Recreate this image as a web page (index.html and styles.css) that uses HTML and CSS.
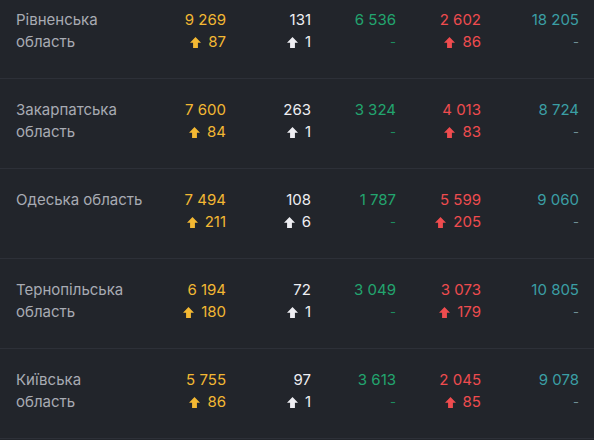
FILE: index.html
```html
<!DOCTYPE html>
<html lang="uk">
<head>
<meta charset="utf-8">
<link rel="stylesheet" href="styles.css">
<title>Області</title>
</head>
<body>
<svg width="0" height="0" class="defs" aria-hidden="true">
  <defs>
    <symbol id="up" viewBox="0 0 10 10"><path d="M5 0 L10 5.2 L7.2 5.2 L7.2 10 L2.8 10 L2.8 5.2 L0 5.2 Z" fill="currentColor"/></symbol>
  </defs>
</svg>
<div class="table">
  <div class="row">
    <div class="name">Рівненська область</div>
    <div class="cell c-yellow"><span>9 269</span><span class="delta"><svg class="ico"><use href="#up"/></svg>87</span></div>
    <div class="cell c-white"><span>131</span><span class="delta"><svg class="ico"><use href="#up"/></svg>1</span></div>
    <div class="cell c-green"><span>6 536</span><span class="dash">-</span></div>
    <div class="cell c-red"><span>2 602</span><span class="delta"><svg class="ico"><use href="#up"/></svg>86</span></div>
    <div class="cell c-teal"><span>18 205</span><span class="dash">-</span></div>
  </div>
  <div class="row">
    <div class="name">Закарпатська область</div>
    <div class="cell c-yellow"><span>7 600</span><span class="delta"><svg class="ico"><use href="#up"/></svg>84</span></div>
    <div class="cell c-white"><span>263</span><span class="delta"><svg class="ico"><use href="#up"/></svg>1</span></div>
    <div class="cell c-green"><span>3 324</span><span class="dash">-</span></div>
    <div class="cell c-red"><span>4 013</span><span class="delta"><svg class="ico"><use href="#up"/></svg>83</span></div>
    <div class="cell c-teal"><span>8 724</span><span class="dash">-</span></div>
  </div>
  <div class="row">
    <div class="name">Одеська область</div>
    <div class="cell c-yellow"><span>7 494</span><span class="delta"><svg class="ico"><use href="#up"/></svg>211</span></div>
    <div class="cell c-white"><span>108</span><span class="delta"><svg class="ico"><use href="#up"/></svg>6</span></div>
    <div class="cell c-green"><span>1 787</span><span class="dash">-</span></div>
    <div class="cell c-red"><span>5 599</span><span class="delta"><svg class="ico"><use href="#up"/></svg>205</span></div>
    <div class="cell c-teal"><span>9 060</span><span class="dash">-</span></div>
  </div>
  <div class="row">
    <div class="name">Тернопільська область</div>
    <div class="cell c-yellow"><span>6 194</span><span class="delta"><svg class="ico"><use href="#up"/></svg>180</span></div>
    <div class="cell c-white"><span>72</span><span class="delta"><svg class="ico"><use href="#up"/></svg>1</span></div>
    <div class="cell c-green"><span>3 049</span><span class="dash">-</span></div>
    <div class="cell c-red"><span>3 073</span><span class="delta"><svg class="ico"><use href="#up"/></svg>179</span></div>
    <div class="cell c-teal"><span>10 805</span><span class="dash">-</span></div>
  </div>
  <div class="row">
    <div class="name">Київська область</div>
    <div class="cell c-yellow"><span>5 755</span><span class="delta"><svg class="ico"><use href="#up"/></svg>86</span></div>
    <div class="cell c-white"><span>97</span><span class="delta"><svg class="ico"><use href="#up"/></svg>1</span></div>
    <div class="cell c-green"><span>3 613</span><span class="dash">-</span></div>
    <div class="cell c-red"><span>2 045</span><span class="delta"><svg class="ico"><use href="#up"/></svg>85</span></div>
    <div class="cell c-teal"><span>9 078</span><span class="dash">-</span></div>
  </div>
</div>
</body>
</html>
```
FILE: styles.css
```css
html, body {
  margin: 0;
  padding: 0;
  background: #22252b;
  overflow: hidden;
}
body {
  font-family: Inter, "Noto Sans", sans-serif;
  font-size: 15px;
  line-height: 22px;
  color: #a6a9b1;
}
.defs {
  position: absolute;
}
.table {
  margin-top: -11px;
}
.row {
  display: grid;
  grid-template-columns: 140px 70px 85px 85px 85px 98px;
  padding: 20px 15px 25px 16px;
  border-bottom: 1px solid #2d3038;
}
.name {
  color: #a8abb3;
  max-width: 128px;
}
.cell {
  display: flex;
  flex-direction: column;
  align-items: flex-end;
}
.delta {
  display: flex;
  align-items: center;
  gap: 7px;
}
.ico {
  width: 11px;
  height: 11px;
}
.c-yellow { color: #f3b833; }
.c-white { color: #eeeef2; }
.c-green { color: #22a56f; }
.c-red { color: #ef4c4f; }
.c-teal { color: #3b9fa5; }
.c-green .dash { color: #1d8c5f; }
.c-teal .dash { color: #6f8f95; }
.dash {
  font-size: 13px;
}
```
